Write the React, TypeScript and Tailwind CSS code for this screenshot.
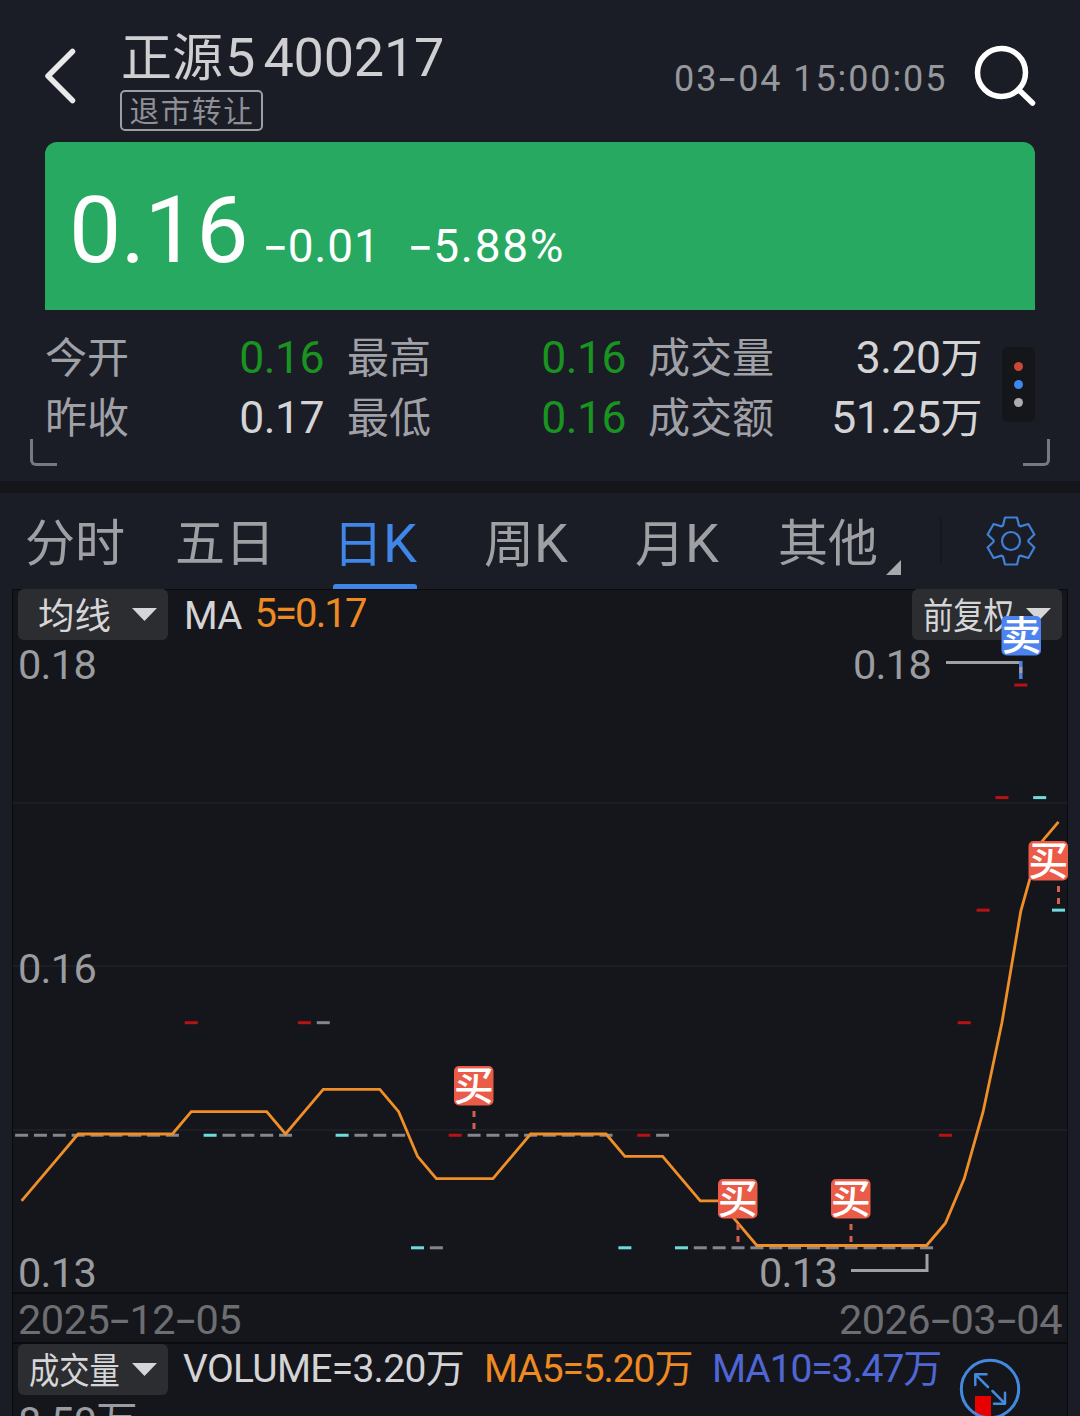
import { Fragment } from "react";
import clsx from "clsx";

type Tone = "up" | "down" | "flat";

type Bar = {
  level: number;
  tone: Tone;
};

const FONT = "font-[Roboto,'Noto_Sans_CJK_SC',sans-serif]";

const STATS = [
  [
    { label: "今开", value: "0.16", green: true },
    { label: "最高", value: "0.16", green: true },
    { label: "成交量", value: "3.20", unit: "万" },
  ],
  [
    { label: "昨收", value: "0.17" },
    { label: "最低", value: "0.16", green: true },
    { label: "成交额", value: "51.25", unit: "万" },
  ],
];

const TABS = [
  { cjk: "分时", width: "w-[150px]" },
  { cjk: "五日", width: "w-[158px]" },
  { cjk: "日", latin: "K", width: "w-[151px]", active: true },
  { cjk: "周", latin: "K", width: "w-[151px]" },
  { cjk: "月", latin: "K", width: "w-[143px]" },
  { cjk: "其他", width: "w-[124px]", more: true },
];

const repeat = (count: number, level: number, tone: Tone = "flat"): Bar[] =>
  Array.from({ length: count }, () => ({ level, tone }));

// level 0 is 0.13, one level is one cent
const BARS: Bar[] = [
  ...repeat(9, 1),
  ...repeat(1, 2, "up"),
  ...repeat(1, 1, "down"),
  ...repeat(4, 1),
  ...repeat(1, 2, "up"),
  ...repeat(1, 2),
  ...repeat(1, 1, "down"),
  ...repeat(3, 1),
  ...repeat(1, 0, "down"),
  ...repeat(1, 0),
  ...repeat(1, 1, "up"),
  ...repeat(8, 1),
  ...repeat(1, 0, "down"),
  ...repeat(1, 1, "up"),
  ...repeat(1, 1),
  ...repeat(1, 0, "down"),
  ...repeat(13, 0),
  ...repeat(1, 1, "up"),
  ...repeat(1, 2, "up"),
  ...repeat(1, 3, "up"),
  ...repeat(1, 4, "up"),
  ...repeat(1, 5, "up"),
  ...repeat(1, 4, "down"),
  ...repeat(1, 3, "down"),
];

const BAR_COLORS: Record<Tone, string> = {
  up: "#b81215",
  down: "#6fdcdc",
  flat: "#83858f",
};

const barX = (index: number) => 21.6 + index * 18.853;
const barY = (level: number) => 1247.8 - level * 112.55;
const maY = (level: number) => 1245.5 - level * 111.5;

// four closes before the first visible bar, needed for the 5 day average
const LEVELS = [0, 0, 0, 1, ...BARS.map((bar) => bar.level)];

const MA_POINTS = BARS.map((_, i) => {
  const sum = LEVELS.slice(i, i + 5).reduce((a, b) => a + b, 0);
  return `${barX(i)},${maY(sum / 5)}`;
}).join(" ");

const TRADES = [
  { text: "买", x: 454, y: 1066, line: 474 },
  { text: "买", x: 718, y: 1179, line: 738 },
  { text: "买", x: 831, y: 1179, line: 851 },
  { text: "买", x: 1028.5, y: 841, line: 1058.5 },
];

const GEAR_POINTS = Array.from({ length: 6 }, (_, i) => {
  const a = (i * Math.PI) / 3;
  return [
    [-8, -15.5],
    [-6, -23.5],
    [6, -23.5],
    [8, -15.5],
  ]
    .map(
      ([x, y]) =>
        `${(x * Math.cos(a) - y * Math.sin(a)).toFixed(2)},${(x * Math.sin(a) + y * Math.cos(a)).toFixed(2)}`,
    )
    .join(" ");
}).join(" ");

// the plain hyphen is too short next to Roboto's figures
const Num = ({ children }: { children: string }) => (
  <>
    {children.split("-").map((part, i) => (
      <Fragment key={i}>
        {i > 0 && (
          <span className="mx-[0.02em] inline-block scale-x-125 font-[Inter,sans-serif]">
            -
          </span>
        )}
        {part}
      </Fragment>
    ))}
  </>
);

const Header = () => (
  <header className="flex h-[142px] items-start">
    <svg className="mt-[46px] ml-[42px] h-[60px] w-[36px]" viewBox="0 0 36 60">
      <path
        d="M30.500 5.500 L6 30 L30.500 54.500"
        fill="none"
        stroke="#e9e9eb"
        strokeWidth="5.500"
        strokeLinecap="round"
        strokeLinejoin="round"
      />
    </svg>
    <div className="mt-[30px] ml-[42px] w-[554px]">
      <h1 className="flex h-[56px] items-baseline text-[#cfcfd1]">
        <span className="ml-px text-[51px] leading-[56px]">正源</span>
        <span className="ml-0.5 text-[54px] leading-[56px]">5</span>
        <span className="ml-[8px] text-[54px] leading-[56px] tracking-[-0.200px]">
          400217
        </span>
      </h1>
      <div className="mt-1 flex h-[41px] w-[143px] items-center justify-center rounded-[5px] border-2 border-[#9d9ea2] pt-[4px] pl-px text-[29.500px] leading-[37px] tracking-[1.700px] text-[#8f9095]">
        退市转让
      </div>
    </div>
    <time className="mt-[56px] w-[278px] text-[36px] leading-[44px] tracking-[1.900px] whitespace-nowrap text-[#97989c]">
      <Num>03-04 15:00:05</Num>
    </time>
    <svg className="mt-[44px] ml-[20px] h-[64px] w-[64px]" viewBox="0 0 64 64">
      <g fill="none" stroke="#fff" strokeWidth="5.500" strokeLinecap="round">
        <circle cx="29.500" cy="28.500" r="24" />
        <path d="M46.500 45.500 L60.500 59" />
      </g>
    </svg>
  </header>
);

const Quote = () => (
  <section className="mx-[45px] flex h-[168px] items-baseline rounded-t-[12px] bg-[#27a962] pt-[40px] pl-[24px] text-white">
    <span className="text-[93px] leading-[97px] tracking-[-0.600px]">0.16</span>
    <span className="ml-[16px] text-[46px] leading-[50px] tracking-[0.800px]">
      <Num>-0.01</Num>
    </span>
    <span className="ml-[28px] text-[46px] leading-[50px] tracking-[1.700px]">
      <Num>-5.88%</Num>
    </span>
  </section>
);

const Stats = () => (
  <section className="relative flex h-[171px] pt-[28px] pl-[45px]">
    <div className="w-[938px]">
      {STATS.map((row, i) => (
        <div key={i} className="flex h-[60px] leading-[40px]">
          {row.map((item, j) => (
            <div
              key={item.label}
              className={clsx(
                "flex items-baseline justify-between",
                j === 0 && "w-[279px]",
                j === 1 && "ml-[23px] w-[279px]",
                j === 2 && "ml-[22px] w-[334px]",
              )}
            >
              <span className="text-[42px] text-[#a0a1a6]">{item.label}</span>
              <span
                className={clsx(
                  "text-[44.500px] tracking-[-0.500px]",
                  item.green ? "text-[#1a9420]" : "text-[#d4d4d6]",
                )}
              >
                {item.value}
                {item.unit && <span className="text-[42px]">{item.unit}</span>}
              </span>
            </div>
          ))}
        </div>
      ))}
    </div>
    <div className="mt-[9px] ml-[19px] flex h-[75px] w-[33px] flex-col items-center gap-[9px] rounded-[6px] bg-[#15161a] pt-[15px]">
      <i className="size-[9px] rounded-full bg-[#cc4736]" />
      <i className="size-[9px] rounded-full bg-[#3f86ee]" />
      <i className="size-[9px] rounded-full bg-[#adadb1]" />
    </div>
    <i className="absolute bottom-[15px] left-[30px] h-[27px] w-[27px] rounded-bl-[6px] border-b-[3px] border-l-[3px] border-[#77797e]" />
    <i className="absolute right-[30px] bottom-[15px] h-[27px] w-[27px] rounded-br-[6px] border-r-[3px] border-b-[3px] border-[#77797e]" />
  </section>
);

const Tabs = () => (
  <nav className="flex h-[96px] pl-[25px]">
    {TABS.map((tab) => (
      <div
        key={tab.cjk}
        className={clsx(
          "flex flex-col",
          tab.width,
          tab.active ? "text-[#3f86e8]" : "text-[#9fa0a4]",
        )}
      >
        <div className="flex h-[91px] items-baseline pt-[23px] leading-[56px]">
          <span className="text-[50px]">{tab.cjk}</span>
          {tab.latin && <span className="text-[54px]">{tab.latin}</span>}
          {tab.more && (
            <svg className="ml-[8px] size-[15px] translate-y-[14px]" viewBox="0 0 15 15">
              <path d="M15 0 V15 H0 Z" fill="#a8a9ad" />
            </svg>
          )}
        </div>
        {tab.active && (
          <span className="h-[5px] w-[84px] rounded-t-[3px] bg-[#3f86e8]" />
        )}
      </div>
    ))}
    <span className="mt-[25px] ml-[38px] h-[45px] w-[2px] bg-[#16171c]" />
    <svg className="mt-[22px] ml-[43px] size-[52px]" viewBox="-26 -26 52 52">
      <g fill="none" stroke="#3f80d8" strokeWidth="2.200" strokeLinejoin="round">
        <polygon points={GEAR_POINTS} />
        <circle r="9" />
      </g>
    </svg>
  </nav>
);

const Picker = ({ label, narrow }: { label: string; narrow?: boolean }) => (
  <button className="flex h-[51px] w-[150px] shrink-0 items-center justify-between rounded-[6px] bg-[#2c2d31] pr-[11px] pl-[11px] text-[#d6d6d8]">
    <span
      className={clsx(
        "origin-left pt-[4px] text-[36.500px] leading-[51px] whitespace-nowrap",
        narrow ? "w-[92px] scale-x-[0.83]" : "pl-[9px]",
      )}
    >
      {label}
    </span>
    <svg className="h-[13px] w-[25px]" viewBox="0 0 25 13">
      <path d="M0 0 H25 L12.500 13 Z" fill="#d6d6d8" />
    </svg>
  </button>
);

const Plot = () => (
  <svg
    className="relative z-10 block h-[652px] w-[1055px] overflow-visible"
    viewBox="13 640 1055 652"
  >
    {[803, 966, 1130].map((y) => (
      <path key={y} d={`M13 ${y} H1067`} stroke="#202228" strokeWidth="1.500" />
    ))}
    {BARS.map((bar, i) => (
      <rect
        key={i}
        x={barX(i) - 6.5}
        y={barY(bar.level) - 1.5}
        width="13"
        height="3"
        fill={BAR_COLORS[bar.tone]}
      />
    ))}
    <polyline points={MA_POINTS} fill="none" stroke="#f08f28" strokeWidth="2.800" />
    <g fill="none" stroke="#9fa0a3" strokeWidth="3">
      <path d="M946 662.500 H1022" />
      <path d="M851 1270.500 H927 V1254" />
    </g>
    <g fill="#9b9c9f" fontSize="41.500" letterSpacing="-0.700">
      <text x="18" y="678.500">0.18</text>
      <text x="18" y="982.500">0.16</text>
      <text x="18" y="1286.500">0.13</text>
      <text x="853" y="679">0.18</text>
      <text x="759" y="1286.500">0.13</text>
    </g>
    {TRADES.map(({ text, x, y, line }) => (
      <g key={x}>
        <path
          d={`M${line} ${y + 45} v18.500`}
          stroke="#d4604f"
          strokeWidth="3"
          strokeDasharray="6 6"
        />
        <rect x={x} y={y} width="39.500" height="39.500" rx="5" fill="#ea5b48" />
        <text x={x - 0.25} y={y + 34} fontSize="40" fontWeight="500" fill="#fff">
          {text}
        </text>
      </g>
    ))}
    <path d="M1020.800 661 v18" stroke="#4f80e4" strokeWidth="3.500" />
    <path d="M1020.800 667 v6" stroke="#9fa0a3" strokeWidth="3" />
    <rect x="1001.500" y="616" width="39.500" height="39.500" rx="5" fill="#4c83ee" />
    <text x="1001.250" y="650" fontSize="40" fontWeight="500" fill="#fff">
      卖
    </text>
  </svg>
);

const VolumePanel = () => (
  <div className="relative h-[72px]">
    <div className="flex items-start pl-[5px]">
      <Picker label="成交量" narrow />
      <div className="flex pt-px text-[39px] leading-[48px] whitespace-nowrap">
        <span className="ml-[15px] w-[301px] tracking-[-0.700px] text-[#d4d4d6]">
          VOLUME=3.20万
        </span>
        <span className="w-[228px] tracking-[-1.100px] text-[#ee8a22]">MA5=5.20万</span>
        <span className="tracking-[-1.100px] text-[#4f66d4]">MA10=3.47万</span>
      </div>
    </div>
    <div className="mt-[3px] ml-[5px] text-[41.500px] leading-[48px] tracking-[-0.700px] text-[#9b9c9f]">
      8.50万
    </div>
    <svg
      className="absolute top-[14px] left-[946px] size-[62px]"
      viewBox="959 1358 62 62"
    >
      <rect x="975" y="1396" width="16" height="24" fill="#e80000" />
      <g
        fill="none"
        stroke="#4489e0"
        strokeWidth="2.500"
        strokeLinecap="round"
        strokeLinejoin="round"
      >
        <circle cx="990" cy="1389" r="28.700" strokeWidth="3" />
        <path d="M988 1387 L975.300 1374.300 M986.500 1374.300 H975.300 V1385" />
        <path d="M992.500 1391 L1005 1403.700 M994 1403.700 H1005 V1392.700" />
      </g>
    </svg>
  </div>
);

const App = () => (
  <main className={clsx(FONT, "h-[1416px] w-[1080px] overflow-hidden bg-[#1b1d26]")}>
    <Header />
    <Quote />
    <Stats />
    <div className="h-[12px] bg-[#15161a]" />
    <Tabs />
    <section className="mx-[12px] h-[827px] border-x border-t border-[#0a0b0f] bg-[#15161b]">
      <div className="-mt-px flex h-[51px] items-start justify-between px-[5px]">
        <div className="flex">
          <Picker label="均线" />
          <span className="ml-[16px] text-[38.500px] leading-[54px] tracking-[-0.800px] text-[#d4d4d6]">
            MA
          </span>
          <span className="ml-[13px] text-[40px] leading-[50px] tracking-[-1.900px] text-[#ee8a22]">
            5=0.17
          </span>
        </div>
        <Picker label="前复权" narrow />
      </div>
      <Plot />
      <div className="flex h-[52px] items-center justify-between border-y-2 border-[#0a0b0f] px-[5px] pt-[2px] text-[41.500px] leading-[48px] tracking-[-0.500px] text-[#6d6e72]">
        <span>
          <Num>2025-12-05</Num>
        </span>
        <span>
          <Num>2026-03-04</Num>
        </span>
      </div>
      <VolumePanel />
    </section>
  </main>
);

export default App;
